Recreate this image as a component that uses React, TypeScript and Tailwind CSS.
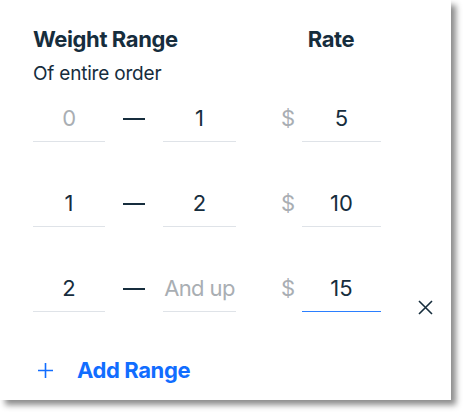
import React from "react";

const font = { fontFamily: "Inter, 'Noto Sans', sans-serif" };

function Field({ w, value, muted, active }: { w: string; value: string; muted?: boolean; active?: boolean }) {
  return (
    <div className={`${w} h-[46px] flex flex-col`}>
      <div
        className={`flex-1 flex items-center justify-center whitespace-nowrap text-[22px] ${
          muted ? "text-[#a9aeb3] tracking-[-0.6px]" : "text-[#162d3d]"
        }`}
      >
        {value}
      </div>
      {active ? <div className="h-px bg-blue-500" /> : <div className="h-px bg-[#dfe3e8]" />}
    </div>
  );
}

function Row({ from, to, rate, fromMuted, toMuted, active, close }: { from: string; to: string; rate: string; fromMuted?: boolean; toMuted?: boolean; active?: boolean; close?: boolean }) {
  return (
    <div className="flex items-end">
      <Field w="w-[72px]" value={from} muted={fromMuted} />
      <div className="w-[58px] h-[46px] flex items-center justify-center">
        <div className="w-[22px] h-[2px] bg-[#162d3d]" />
      </div>
      <Field w="w-[73px]" value={to} muted={toMuted} />
      <div className="w-[45px]" />
      <div className="w-[21px] h-[46px] flex items-center text-[22px] text-[#a9aeb3]">$</div>
      <Field w="w-[79px]" value={rate} active={active} />
      {close && (
        <div className="ml-[37px] mb-[-3px] h-[14px] flex items-center">
          <svg width="15" height="15" viewBox="0 0 15 15" fill="none" stroke="#162d3d" strokeWidth="1.6">
            <path d="M1 1 L14 14 M14 1 L1 14" />
          </svg>
        </div>
      )}
    </div>
  );
}

export default function App() {
  return (
    <div className="w-[466px] h-[415px] bg-white" style={font}>
      <div className="w-[451px] h-[400px] bg-white shadow-[5px_5px_6px_rgba(0,0,0,0.45)] pl-[33px] pt-[23px]">
        <div className="flex items-center">
          <div className="w-[248px] text-[22px] font-bold text-[#162d3d] tracking-[-0.4px]">Weight Range</div>
          <div className="w-[100px] text-center text-[22px] font-bold text-[#162d3d] tracking-[-0.4px]">Rate</div>
        </div>
        <div className="mt-[4px] text-[19px] text-[#162d3d] tracking-[-0.2px]">Of entire order</div>
        <div className="mt-[7px] flex flex-col gap-[39px]">
          <Row from="0" to="1" rate="5" fromMuted />
          <Row from="1" to="2" rate="10" />
          <Row from="2" to="And up" rate="15" toMuted active close />
        </div>
        <div className="mt-[42px] flex items-center">
          <svg width="15" height="15" viewBox="0 0 15 15" className="ml-[5px]" stroke="#116dff" strokeWidth="1.6">
            <path d="M7.5 0 V15 M0 7.5 H15" />
          </svg>
          <span className="ml-[24px] text-[22px] font-bold text-[#116dff] tracking-[-0.4px]">Add Range</span>
        </div>
      </div>
    </div>
  );
}
